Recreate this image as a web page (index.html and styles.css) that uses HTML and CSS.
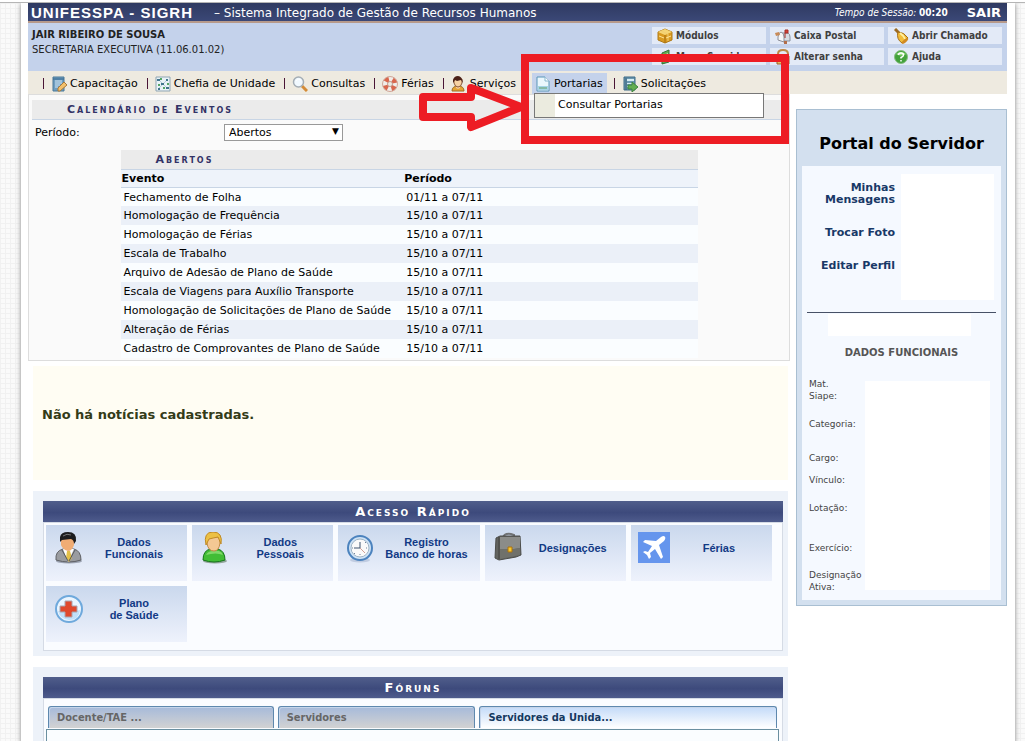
FILE: index.html
```html
<!DOCTYPE html>
<html lang="pt-BR">
<head>
<meta charset="utf-8">
<title>UNIFESSPA - SIGRH</title>
<link rel="stylesheet" href="styles.css">
</head>
<body>
<div class="page">
<header>
  <div class="topbar">
    <h1 class="brand">UNIFESSPA - SIGRH</h1>
    <span class="system">– Sistema Integrado de Gestão de Recursos Humanos</span>
    <span class="session"><i>Tempo de Sessão:</i> <b>00:20</b></span>
    <a class="exit" href="#">SAIR</a>
  </div>
  <div class="userbar">
    <div class="user"><strong>JAIR RIBEIRO DE SOUSA</strong><span>SECRETARIA EXECUTIVA (11.06.01.02)</span></div>
    <nav class="tools">
      <a href="#"><svg class="icon" viewBox="0 0 16 16"><path d="M1 4l7-3 7 3v8l-7 3-7-3z" fill="#d99a20" stroke="#b07a18"/><path d="M1 4l7 3 7-3-7-3z" fill="#f5d576"/><path d="M8 7v8" stroke="#a46d11"/><path d="M4 3l7 3v7" fill="none" stroke="#f2cf74"/><path d="M2 8l5 2m2 0l5-2" stroke="#ffe398"/></svg>Módulos</a>
      <a href="#"><svg class="icon" viewBox="0 0 16 16"><path d="M7 5h6q2 1 2 4v4H8z" fill="#d7dbe2" stroke="#888f9c"/><path d="M3 9q0-4 3-5 3 1 3 5v5l-6-2z" fill="#f4f5f7" stroke="#8d8f99"/><path d="M10 10V2h3v3h-3" fill="#d84035" stroke="#a32c26"/><path d="M0 5l4-1 1 3-4 1z" fill="#c88b58"/><path d="M9 13h3v3H9z" fill="#b36e49"/></svg>Caixa Postal</a>
      <a href="#"><svg class="icon" viewBox="0 0 16 16"><path d="M2 1l4 4" stroke="#9b6b24" stroke-width="3"/><path d="M5 4q6 0 10 6l-6 5Q3 11 5 4z" fill="#f2bc38" stroke="#a56e18"/><path d="M7 5q4 3 5 6" stroke="#fff0a1" stroke-width="2" fill="none"/><ellipse cx="12" cy="13" rx="4" ry="1.500" transform="rotate(-40 12 13)" fill="#d18a22"/></svg>Abrir Chamado</a>
      <a href="#"><svg class="icon" viewBox="0 0 16 16"><path d="M5 15V4l7-3v12z" fill="#63aa51" stroke="#35703a"/><path d="M7 6l4-2v7l-4 1z" fill="#c7e9b9"/></svg>Menu Servidor</a>
      <a href="#"><svg class="icon" viewBox="0 0 16 16"><path d="M3 8V5q0-4 5-4t5 4v3" fill="none" stroke="#bd8844" stroke-width="2"/><path d="M2 7h12v8H2z" fill="#e9bd62" stroke="#976129"/><path d="M8 9v4" stroke="#794715" stroke-width="2"/></svg>Alterar senha</a>
      <a href="#"><svg class="icon" viewBox="0 0 16 16"><circle cx="8" cy="8" r="6.500" fill="#43a23b" stroke="#86bd80"/><path d="M3 5q5-4 10 0-5 3-10 0" fill="#9be087"/><path d="M5.500 6q0-2 2.500-2t2.500 2q0 1.500-2.500 2.500v1M8 11v1.500" fill="none" stroke="#fff" stroke-width="1.500"/></svg>Ajuda</a>
    </nav>
  </div>
  <nav class="menu">
    <a href="#"><svg class="icon" viewBox="0 0 16 16"><path d="M2 1h11v14H2z" fill="#6e9ec1" stroke="#4a7898"/><path d="M2 3h11" stroke="#35658b"/><path d="M4 5h7M4 7h7M4 9h5M4 11h3" stroke="#d5e8f4"/><path d="M7 12l6-6 3 3-7 6H7z" fill="#f3c06b" stroke="#a97a3a"/></svg>Capacitação</a>
    <a href="#"><svg class="icon" viewBox="0 0 16 16"><path d="M1 1h14v14H1z" fill="#e9f2f7" stroke="#8fa5b3"/><path d="M4 4l4 4 4-4M8 8l-4 4m4-4l4 4" stroke="#b5cbd8" fill="none"/><path d="M2 3h3v2H2zm9 0h2v2h-2zM6 7h3v2H6zm-3 5h2v2H3zm8-1h3v2h-3z" fill="#41758c"/><path d="M5 2h2v2H5zm7 5h2v2h-2zM3 8h2v2H3zm5 3h2v2H8z" fill="#55a666"/></svg>Chefia de Unidade</a>
    <a href="#"><svg class="icon" viewBox="0 0 16 16"><path d="M10 10l5 5" stroke="#d38b38" stroke-width="3"/><circle cx="6.500" cy="6" r="5" fill="#f1f9ff" stroke="#a4adb5" stroke-width="1.500"/><path d="M4 5q2-3 5-1" stroke="#fff" fill="none"/></svg>Consultas</a>
    <a href="#"><svg class="icon" viewBox="0 0 16 16"><circle cx="8" cy="8" r="5" fill="none" stroke="#f0ede9" stroke-width="5"/><circle cx="8" cy="8" r="5" fill="none" stroke="#d9674d" stroke-width="5" stroke-dasharray="4 3.850" transform="rotate(25 8 8)"/><circle cx="8" cy="8" r="7.500" fill="none" stroke="#cfa598"/><circle cx="8" cy="8" r="2.500" fill="none" stroke="#c39a8e"/></svg>Férias</a>
    <a href="#"><svg class="icon" viewBox="0 0 16 16"><path d="M1 15q0-5 6-5t6 5z" fill="#e5a536" stroke="#9d6c23"/><path d="M5 9h4v3l-2 1-2-1z" fill="#f5c89a"/><path d="M3 3h8v4q-1 4-4 4T3 7z" fill="#f7d2a4" stroke="#8a5a3c"/><path d="M2 7V4q1-4 5-4t5 7l-2-3-4 1-2-1z" fill="#4b2018"/></svg>Serviços</a>
    <a class="active" href="#"><svg class="icon" viewBox="0 0 16 16"><path d="M2 1h8l4 4v10H2z" fill="#eaf7fd" stroke="#5a95b7"/><path d="M10 1v4h4" fill="#fff" stroke="#86b6ce"/><path d="M3 10h10v4H3z" fill="#a5d5e7"/><path d="M4 12h8" stroke="#669d66"/></svg>Portarias</a>
    <a href="#"><svg class="icon" viewBox="0 0 16 16"><path d="M2 1h11v13H2z" fill="#6b97b0" stroke="#3d6a86"/><path d="M4 2v12" stroke="#3a6078"/><path d="M5 3h7v2H5zm0 4h6v1H5zm0 3h4v1H5z" fill="#d7edf2"/><path d="M6 9h4V6l6 5-6 5v-3H6z" fill="#63ae50" stroke="#3f8440"/></svg>Solicitações</a>
    <div class="submenu"><a href="#">Consultar Portarias</a></div>
  </nav>
</header>
<div class="columns">
<main>
  <section class="calendar">
    <h2 class="caption">Calendário de Eventos</h2>
    <div class="filter"><label for="periodo">Período:</label><div class="pick"><select id="periodo"><option>Abertos</option></select></div></div>
    <table class="events">
      <caption class="caption">Abertos</caption>
      <thead><tr><th>Evento</th><th>Período</th></tr></thead>
      <tbody>
        <tr><td>Fechamento de Folha</td><td>01/11 a 07/11</td></tr>
        <tr><td>Homologação de Frequência</td><td>15/10 a 07/11</td></tr>
        <tr><td>Homologação de Férias</td><td>15/10 a 07/11</td></tr>
        <tr><td>Escala de Trabalho</td><td>15/10 a 07/11</td></tr>
        <tr><td>Arquivo de Adesão de Plano de Saúde</td><td>15/10 a 07/11</td></tr>
        <tr><td>Escala de Viagens para Auxílio Transporte</td><td>15/10 a 07/11</td></tr>
        <tr><td>Homologação de Solicitações de Plano de Saúde</td><td>15/10 a 07/11</td></tr>
        <tr><td>Alteração de Férias</td><td>15/10 a 07/11</td></tr>
        <tr><td>Cadastro de Comprovantes de Plano de Saúde</td><td>15/10 a 07/11</td></tr>
      </tbody>
    </table>
  </section>
  <section class="news"><p>Não há notícias cadastradas.</p></section>
  <section class="block">
    <h2 class="block-title">Acesso Rápido</h2>
    <div class="tiles">
      <a href="#"><svg class="big" viewBox="0 0 32 32"><ellipse cx="16" cy="29" rx="13" ry="2.500" fill="#6e7584" opacity=".6"/><path d="M3 28q-1-9 7-11h11q7 2 7 11-12 4-25 0z" fill="#9a9ca0" stroke="#5f6165"/><path d="M10 17l5 13 6-13z" fill="#fff"/><path d="M14 19h3l2 7-3 4-3-4z" fill="#e3c04a"/><path d="M9 18l6 11m7-11l-6 11" stroke="#55585d" fill="none"/><path d="M8 6q7-4 13 0v7q-2 6-6 6-5-1-7-6z" fill="#f0ac74"/><path d="M7 10V5q1-5 8-5 9 0 8 9l-2 3q0-4-3-5l-9 1z" fill="#1c1c1e"/><path d="M10 4q4-3 8-1" stroke="#777" fill="none"/></svg><span>Dados<br>Funcionais</span></a>
      <a href="#"><svg class="big" viewBox="0 0 32 32"><ellipse cx="16" cy="29" rx="12" ry="2.500" fill="#5b765e" opacity=".6"/><path d="M4 28q0-10 8-11h7q7 2 7 11-11 4-22 0z" fill="#42bd35" stroke="#16751a"/><path d="M7 23q2-4 7-4h6q3 1 4 4-7-3-17 0" fill="#9be480" opacity=".7"/><path d="M8 5h13v6q-1 8-6 8-6 0-7-8z" fill="#f4c894" stroke="#c58a46"/><path d="M7 13Q4 0 14 0q10 0 8 12l-3-7q-5 1-9 2z" fill="#ecc044" stroke="#c08a26"/></svg><span>Dados<br>Pessoais</span></a>
      <a href="#"><svg class="big" viewBox="0 0 32 32"><ellipse cx="15" cy="28" rx="10" ry="2.500" fill="#a0b0cc" opacity=".5"/><circle cx="15" cy="16" r="12" fill="#cfe3f6" stroke="#4c83be" stroke-width="2"/><circle cx="15" cy="16" r="9" fill="#fafafa" stroke="#9fb4c5"/><path d="M15 10v6H9" fill="none" stroke="#3d536e" stroke-width="1"/><path d="M15 16l5 5" stroke="#d0a095"/><path d="M22 16h-1m-6 7v-1m-8-6h1M20 11l1-1M10 21l-1 1" stroke="#71849c"/></svg><span>Registro<br>Banco de horas</span></a>
      <a href="#"><svg class="big" viewBox="0 0 32 32"><path d="M11 6q1-5 8-4l3 1v3" fill="none" stroke="#707274" stroke-width="2"/><path d="M4 6l4-2h20l1 19-5 2-17 3-4-2z" fill="#62635f" stroke="#4c4d4a"/><path d="M8 5h20v11q-10 2-20 1z" fill="#8b8c89"/><path d="M8 17q10 1 20-1v7l-20 4z" fill="#70716b"/><path d="M7 5v22" stroke="#42433f"/><path d="M16 15h4v5h-4z" fill="#f8c62b" stroke="#a97310"/></svg><span>Designações</span></a>
      <a href="#"><svg class="big" viewBox="0 0 32 32"><path d="M0 0h32v31H0z" fill="#6595ed"/><path d="M27 5q1 1-1 4l-5 4 4 12-2 2-6-10-5 4 1 4-2 2-2-4-4-3 2-1 3 1 4-6-9-4 2-2 11 1 5-4q3-2 4 0z" fill="#fff"/></svg><span>Férias</span></a>
      <a href="#"><svg class="big" viewBox="0 0 32 32"><circle cx="16" cy="16" r="13" fill="#eaf5ff" stroke="#6fa9dc" stroke-width="2"/><path d="M5 18q11 3 22-1-1 10-11 10Q7 26 5 18" fill="#c0e0fa"/><path d="M12 8h7v5h5v6h-5v5h-7v-5H7v-6h5z" fill="#e0482c" stroke="#a9a4ae"/></svg><span>Plano<br>de Saúde</span></a>
    </div>
  </section>
  <section class="block">
    <h2 class="block-title">Fóruns</h2>
    <div class="forum">
      <div class="tabs"><button type="button">Docente/TAE ...</button><button type="button">Servidores</button><button type="button" class="current">Servidores da Unida...</button></div>
      <div class="panel"></div>
    </div>
  </section>
</main>
<aside class="portal">
  <h2>Portal do Servidor</h2>
  <div class="portal-body">
    <div class="profile">
      <div class="profile-links"><a href="#">Minhas<br>Mensagens</a><a href="#">Trocar Foto</a><a href="#">Editar Perfil</a></div>
      <div class="photo"></div>
    </div>
    <div class="name"></div>
    <h3>DADOS FUNCIONAIS</h3>
    <div class="data">
      <div class="fields">
        <span>Mat.<br>Siape:</span><span>Categoria:</span><span>Cargo:</span><span>Vínculo:</span><span>Lotação:</span><span>Exercício:</span><span>Designação Ativa:</span>
      </div>
      <div class="values"></div>
    </div>
  </div>
</aside>
</div>
<div class="highlight"></div>
<svg class="arrow" viewBox="0 0 108 54"><path d="M5 16h48V7l50 19-50 20V36H5z" fill="none" stroke="#ed1c24" stroke-width="8" stroke-linejoin="round"/></svg>
</div>
</body>
</html>
```
FILE: styles.css
```css
* { box-sizing: border-box; }
html { padding-top: 2px; background: #fff; }
body {
  margin: 0;
  border-top: 1px solid #b5b5b5;
  background-color: #fafafa;
  background-image: linear-gradient(#f1f1f1 1px, transparent 1px), linear-gradient(90deg, #f1f1f1 1px, transparent 1px);
  background-size: 5px 5px;
  font-family: "DejaVu Sans", Verdana, sans-serif;
  font-size: 11px;
  color: #000;
}
a { color: inherit; text-decoration: none; }
h1, h2, h3, p { margin: 0; }
.page {
  position: relative;
  height: calc(100vh - 3px);
  overflow: hidden;
  margin: 0 10px 0 21px;
  padding: 0 8px 0 7px;
  background: #fff;
  box-shadow: 0 2px 4px 1px #aaa;
}
.icon { width: 16px; height: 16px; flex: none; }
.topbar {
  display: flex;
  align-items: center;
  height: 20px;
  padding: 0 6px 0 3px;
  background: linear-gradient(#2f3a61, #3b4877);
  border-bottom: 2px solid #b79a8b;
  color: #fff;
}
.brand { font: bold 15px "Liberation Sans", Arial, sans-serif; letter-spacing: 1px; }
.system { flex: 1; margin-left: 21px; font-size: 12px; line-height: 20px; padding-top: 2px; }
.session { font-family: "DejaVu Sans Condensed", "DejaVu Sans", sans-serif; font-size: 10px; }
.exit { margin-left: 19px; font-size: 13px; font-weight: bold; }
.userbar {
  display: flex;
  justify-content: space-between;
  height: 48px;
  padding: 4px 5px 0 4px;
  background: #c4d2eb;
}
.user { display: flex; flex-direction: column; font-size: 10px; line-height: 15px; color: #222; }
.tools {
  display: grid;
  grid-template-columns: repeat(3, 114px);
  grid-auto-rows: 17px;
  gap: 4px;
}
.tools a {
  display: flex;
  align-items: center;
  gap: 3px;
  padding-left: 5px;
  background: #e3eaf7;
  color: #404040;
  font: bold 10px "DejaVu Sans Condensed", "DejaVu Sans", sans-serif;
}
.menu {
  position: relative;
  display: flex;
  height: 23px;
  padding: 2px 0 0 10px;
  background: #eeeae0;
}
.menu > a { display: flex; align-items: center; gap: 3px; margin-left: 9px; padding: 0 4px 0 3px; }
.menu > a::before { content: ""; width: 1px; height: 11px; margin: 0 4px 0 -7px; background: #4a1535; }
.menu .active { margin: 0 2px 0 12px; background: #c4d2eb; }
.menu .active::before { display: none; }
.submenu {
  position: absolute;
  z-index: 2;
  left: 506px;
  top: 22px;
  width: 230px;
  padding-left: 20px;
  background: #ebebdf;
  border: 1px solid #777;
}
.submenu a { display: block; padding: 0 3px; background: #fff; line-height: 22px; height: 23px; }
.columns { display: grid; grid-template-columns: minmax(0, 1fr) 211px; gap: 6px; align-items: start; }
.calendar { padding: 5px 3px 2px; background: #fafafa; border: 1px solid #ddd; }
.caption {
  height: 20px;
  padding-left: 35px;
  background: #ebebeb;
  border-bottom: 1px solid #c8d5e5;
  font-size: 11px;
  line-height: 19px;
  font-weight: bold;
  font-variant: small-caps;
  letter-spacing: 2px;
  text-align: left;
  color: #333366;
}
.filter { display: flex; align-items: center; height: 30px; padding: 0 3px 6px; }
.filter label { width: 189px; }
select {
  appearance: none;
  width: 119px;
  height: 17px;
  padding: 0 4px;
  background: #fff;
  border: 1px solid #999;
  border-radius: 0;
  font: inherit;
}
.pick { position: relative; display: flex; }
.pick::after { content: "▼"; position: absolute; right: 4px; top: 2px; font-size: 9px; pointer-events: none; }
.events { width: 577px; max-width: 100%; margin: 0 auto; border-spacing: 0; table-layout: fixed; }
.events th { height: 18px; padding: 0 1px; background: #eef3fa; border-bottom: 1px solid #c8d5e5; text-align: left; line-height: 14px; }
.events th:first-child { width: 49%; }
.events td { height: 19px; padding: 0 3px; background: #fafdff; line-height: 15px; white-space: nowrap; }
.events tbody tr:first-child td { height: 18px; }
.events tr:nth-child(even) td { background: #ebf0f8; }
.news {
  height: 114px;
  margin: 5px 2px 11px 5px;
  padding: 41px 9px;
  background: #fffdf3;
  font-size: 13px;
  font-weight: bold;
  color: #333b18;
}
.block { margin: 0 2px 11px 5px; padding: 10px 5px 5px 10px; background: #edf2f9; }
.block-title {
  height: 21px;
  background: linear-gradient(#505e8b, #3d4a7c 55%, #4e5b8c);
  color: #fff;
  font-size: 13px;
  line-height: 21px;
  font-variant: small-caps;
  letter-spacing: 2px;
  text-align: center;
}
.tiles {
  display: grid;
  grid-template-columns: repeat(5, 1fr);
  gap: 5px;
  padding: 2px 10px 8px 2px;
  background: #fafcff;
  border: 1px solid #d5dbe5;
}
.tiles a {
  display: flex;
  align-items: flex-start;
  height: 56px;
  padding: 7px 4px 0 7px;
  background: linear-gradient(#cad8ed, #eef2fc);
  color: #123a85;
  font: bold 11px/12px "Liberation Sans", Arial, sans-serif;
  text-align: center;
}
.tiles span { display: flex; align-items: center; justify-content: center; flex: 1; height: 32px; }
.big { width: 32px; height: 32px; flex: none; }
.forum { padding: 7px 3px 0 2px; background: #fafcff; border: 1px solid #d5dbe5; }
.tabs { display: grid; grid-template-columns: 226fr 198fr 298fr; gap: 4px; padding: 0 2px; }
.tabs button {
  height: 22px;
  padding: 0 8px;
  border: 1px solid #5e88ae;
  border-bottom: 0;
  border-radius: 3px 3px 0 0;
  background: linear-gradient(#a6bada, #d2d2d2);
  box-shadow: inset 1px 1px #c5d5ea;
  color: #666;
  font: bold 11px "DejaVu Sans Condensed", "DejaVu Sans", sans-serif;
  text-align: left;
}
.tabs .current { background: linear-gradient(#c3daf8, #fff); color: #15395f; }
.panel { height: 80px; margin-top: 1px; background: #fafdff; border: 1px solid #6a8fa0; }
.portal { margin-top: 15px; padding: 0 5px 5px; background: #d3e0ef; border: 1px solid #a9bfd2; }
.portal h2 { height: 56px; padding-top: 22px; font-size: 16px; line-height: 24px; text-align: center; }
.portal-body { padding: 8px 5px 10px; background: #f5f9ff; }
.profile { display: flex; gap: 6px; height: 139px; padding-right: 2px; border-bottom: 1px solid #475166; }
.profile-links { flex: 1; padding-top: 8px; text-align: right; font-weight: bold; line-height: 12px; color: #183867; }
.profile-links a { display: block; margin-bottom: 21px; }
.photo { width: 93px; height: 126px; background: #fff; }
.name { height: 22px; margin: 1px 25px 0 21px; background: #fff; }
.portal h3 { margin-top: 10px; font-size: 10px; line-height: 14px; text-align: center; color: #555; }
.data { display: flex; margin-top: 18px; padding-right: 6px; }
.fields {
  display: grid;
  grid-template-rows: 40px 34px 22px 28px 40px 27px 21px;
  width: 58px;
  padding-left: 2px;
  font-size: 9px;
  line-height: 12px;
  color: #444;
}
.values { flex: 1; margin-top: 3px; background: #fff; }
.highlight { position: absolute; z-index: 3; left: 500px; top: 51px; width: 268px; height: 90px; border: 8px solid #ed1c24; }
.arrow { position: absolute; z-index: 3; left: 397px; top: 78px; width: 108px; height: 54px; }
```
